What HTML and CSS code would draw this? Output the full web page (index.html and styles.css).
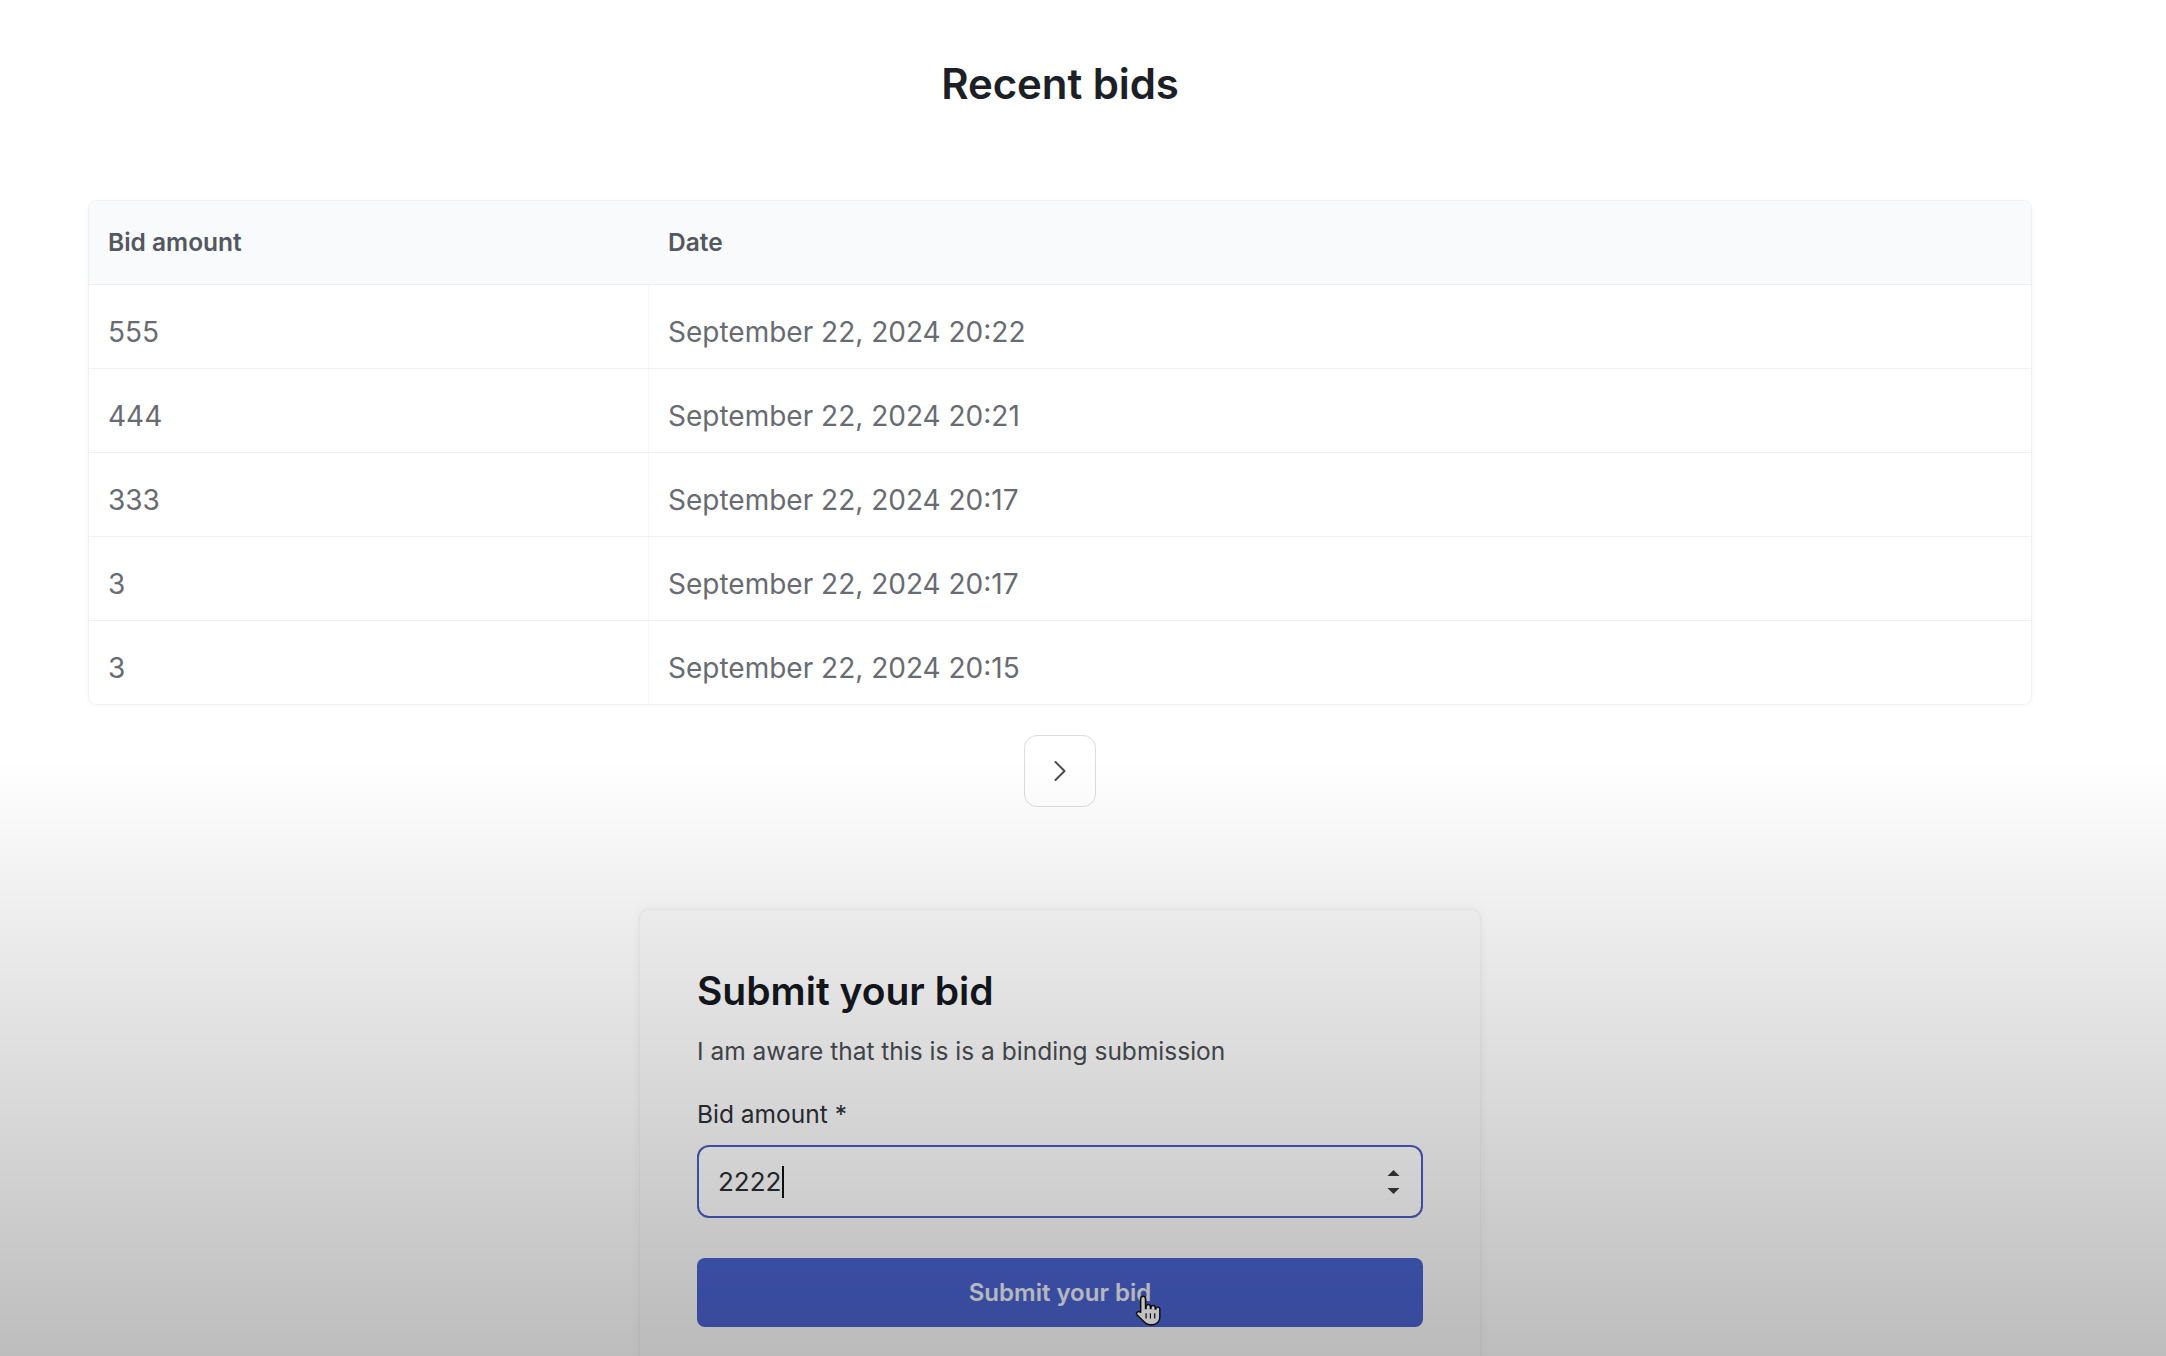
FILE: index.html
```html
<!DOCTYPE html>
<html lang="en">
<head>
<meta charset="utf-8">
<title>Recent bids</title>
<link rel="stylesheet" href="styles.css">
</head>
<body>
<main class="page">
  <h1 class="title">Recent bids</h1>
  <table class="bids">
    <thead>
      <tr><th class="col-amount">Bid amount</th><th>Date</th></tr>
    </thead>
    <tbody>
      <tr><td>555</td><td>September 22, 2024 20:22</td></tr>
      <tr><td>444</td><td>September 22, 2024 20:21</td></tr>
      <tr><td>333</td><td>September 22, 2024 20:17</td></tr>
      <tr><td>3</td><td>September 22, 2024 20:17</td></tr>
      <tr><td>3</td><td>September 22, 2024 20:15</td></tr>
    </tbody>
  </table>
  <div class="pager">
    <button class="pager-btn" type="button" aria-label="Next page">
      <svg width="14" height="22" viewBox="0 0 14 22"><path d="M2.5 2 L11.5 11 L2.5 20" fill="none" stroke="#4a4a4a" stroke-width="2" stroke-linecap="round" stroke-linejoin="round"/></svg>
    </button>
  </div>
  <section class="card">
    <h2 class="card-title">Submit your bid</h2>
    <p class="card-desc">I am aware that this is is a binding submission</p>
    <label class="field-label">Bid amount *</label>
    <div class="field">
      <span class="field-value">2222</span><span class="caret"></span>
      <span class="spinner">
        <svg width="13" height="28" viewBox="0 0 13 28"><path d="M0.5 8 L6.5 2 L12.5 8 Z" fill="#3a3a3a"/><path d="M0.5 20 L6.5 26 L12.5 20 Z" fill="#3a3a3a"/></svg>
      </span>
    </div>
    <div class="submit-wrap">
      <button class="submit" type="button">Submit your bid</button>
      <svg class="hand" width="27" height="33" viewBox="0 0 20 24"><path d="M6 1.5c1 0 1.8.8 1.8 1.8v7.2h.4V9.2c0-.9.7-1.6 1.6-1.6s1.6.7 1.6 1.6v1.3h.4v-.6c0-.9.7-1.6 1.6-1.6s1.6.7 1.6 1.6v1h.4c0-.8.7-1.4 1.5-1.4s1.5.7 1.5 1.5V17c0 3.2-2.4 5.5-5.5 5.5h-2c-2 0-3.3-.9-4.4-2.4L1.5 15.3c-.5-.8-.3-1.8.5-2.3.7-.4 1.6-.2 2.1.4l.1.2V3.3C4.2 2.3 5 1.5 6 1.5z" fill="#fff" stroke="#111" stroke-width="1.1"/><path d="M8.2 14v4M11.4 14v4M14.6 14v4" stroke="#111" stroke-width="0.9"/></svg>
    </div>
  </section>
</main>
</body>
</html>
```
FILE: styles.css
```css
html, body {
  margin: 0;
  padding: 0;
}
body {
  background: #ffffff;
  font-family: Inter, "Liberation Sans", sans-serif;
  color: #1f2937;
  height: 1356px;
  overflow: hidden;
  position: relative;
}
body::after {
  content: "";
  position: fixed;
  left: 0;
  top: 0;
  right: 0;
  bottom: 0;
  pointer-events: none;
  background: linear-gradient(to bottom, rgba(0,0,0,0) 0px, rgba(0,0,0,0) 760px, rgba(0,0,0,0.26) 1356px);
}
.page {
  padding: 0 134px 0 88px;
}
.title {
  margin: 59px 0 0;
  font-size: 42px;
  line-height: 50px;
  font-weight: 600;
  text-align: center;
  color: #1c1f26;
  letter-spacing: -0.1px;
}
.bids {
  margin-top: 91px;
  width: 100%;
  border-collapse: separate;
  border-spacing: 0;
  border: 1px solid #eef0f2;
  border-radius: 9px;
  overflow: hidden;
  box-shadow: 0 1px 4px rgba(0,0,0,0.04);
}
.bids th {
  height: 81px;
  padding: 0 20px 2px 19px;
  text-align: left;
  font-size: 24.5px;
  font-weight: 600;
  color: #53575f;
  background: #f9fafb;
  border-bottom: 1px solid #eceef1;
}
.bids .col-amount {
  width: 521px;
}
.bids td {
  height: 72px;
  padding: 11px 20px 0 19px;
  font-size: 28px;
  font-weight: 400;
  color: #686b72;
  border-bottom: 1px solid #eff0f2;
  background: #fff;
}
.bids td:first-child {
  border-right: 1px solid #f6f6f7;
}
.bids tr:last-child td {
  border-bottom: none;
}
.pager {
  display: flex;
  justify-content: center;
  margin-top: 30px;
}
.pager-btn {
  width: 72px;
  height: 72px;
  border: 1.5px solid #dcdcdc;
  border-radius: 13px;
  background: #fff;
  display: flex;
  align-items: center;
  justify-content: center;
  padding: 0;
}
.card {
  width: 726px;
  margin: 102px auto 0;
  padding: 55px 57px 60px;
  background: #fcfcfc;
  border: 1px solid #f2f2f2;
  border-radius: 10px;
  box-shadow: 0 0 8px rgba(0,0,0,0.06);
}
.card-title {
  margin: 0;
  font-size: 39px;
  line-height: 52px;
  font-weight: 600;
  color: #151820;
}
.card-desc {
  margin: 17px 0 0;
  font-size: 24.5px;
  line-height: 34px;
  color: #4a4d53;
}
.field-label {
  display: block;
  margin-top: 29px;
  font-size: 24.5px;
  line-height: 34px;
  font-weight: 400;
  color: #2e3137;
}
.field {
  margin-top: 14px;
  height: 73px;
  box-sizing: border-box;
  border: 2.5px solid #4d5cc4;
  border-radius: 12px;
  background: #fff;
  display: flex;
  align-items: center;
  padding: 0 21px 0 19px;
}
.field-value {
  font-size: 26px;
  color: #2b2e33;
}
.caret {
  width: 2px;
  height: 32px;
  background: #111;
  margin-left: 1px;
}
.spinner {
  margin-left: auto;
  display: flex;
  align-items: center;
}
.submit-wrap {
  position: relative;
  margin-top: 40px;
}
.submit {
  width: 100%;
  height: 69px;
  border: none;
  border-radius: 8px;
  background: #4a63cf;
  color: #eef0f8;
  font-family: Inter, "Liberation Sans", sans-serif;
  font-size: 24px;
  font-weight: 600;
  display: block;
}
.hand {
  position: absolute;
  left: 438px;
  top: 36px;
}
```
